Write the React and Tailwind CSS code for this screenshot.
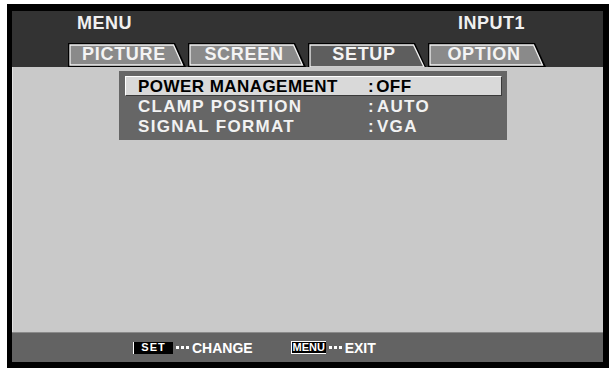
import React from 'react'

const font = { fontFamily: '"Liberation Sans", Arial, sans-serif' }

function Tab({ label, active }) {
  return (
    <div className="relative w-[118px] h-[24px] flex items-center justify-center pr-[6px]">
      <svg className="absolute inset-0" width="118" height="24" viewBox="0 0 118 24">
        <polygon points="0,0 107,0 118,24 0,24" fill="#000" />
        <polygon
          points={active ? '2,2 105.5,2 116,24 2,24' : '2,2 105.5,2 114.5,22 2,22'}
          fill={active ? '#5e5e5e' : '#8a8a8a'}
          stroke="#f2f2f2"
          strokeWidth="1.3"
        />
      </svg>
      <span className="relative -mt-[2px] text-[18px] leading-none font-bold tracking-[0.7px] text-[#f4f4f4]">
        {label}
      </span>
    </div>
  )
}

function Row({ label, value, selected }) {
  return (
    <div
      className={
        selected
          ? 'flex h-[20px] items-center pl-[12px] bg-[#d9d9d9] border-t border-l border-white border-b border-r border-b-[#3a3a3a] border-r-[#3a3a3a] text-black tracking-[0.45px]'
          : 'flex h-[20px] items-center pl-[13px] text-[#f2f2f2] tracking-[1.3px]'
      }
    >
      <span className="w-[230px] text-[17px] leading-none font-bold">{label}</span>
      <span className="text-[17px] leading-none font-bold">
        <span className="mr-[2px]">:</span>
        {value}
      </span>
    </div>
  )
}

function Dots() {
  return (
    <span className="flex gap-[2px] mx-[3px]">
      <span className="w-[3px] h-[3px] bg-white" />
      <span className="w-[3px] h-[3px] bg-white" />
      <span className="w-[3px] h-[3px] bg-white" />
    </span>
  )
}

export default function App() {
  return (
    <div className="w-[609px] h-[368px] bg-white pl-[7px] pt-[4px]" style={font}>
      <div className="w-[602px] h-[364px] bg-black pl-[5px] pt-[7px]">
        <div className="w-[591px] h-[351px] flex flex-col">
          {/* header */}
          <div className="h-[56px] bg-[#333333] flex flex-col">
            <div className="h-[20px] mt-[2px] flex items-center text-[18px] leading-none font-bold text-[#f0f0f0] tracking-[0.5px]">
              <span className="ml-[65px]">MENU</span>
              <span className="ml-auto mr-[78px]">INPUT1</span>
            </div>
            <div className="mt-[10px] h-[24px] ml-[56px] flex gap-[2px]">
              <Tab label="PICTURE" />
              <Tab label="SCREEN" />
              <Tab label="SETUP" active />
              <Tab label="OPTION" />
            </div>
          </div>

          {/* body */}
          <div className="flex-1 bg-[#c9c9c9] border-l border-[#e0e0e0] pt-[4px] pl-[106px]">
            <div className="w-[388px] h-[69px] bg-[#666666] pt-[5px] pl-[6px] pr-[5px]">
              <Row label="POWER MANAGEMENT" value="OFF" selected />
              <Row label="CLAMP POSITION" value="AUTO" />
              <Row label="SIGNAL FORMAT" value="VGA" />
            </div>
          </div>

          {/* footer */}
          <div className="h-[30px] bg-[#636363] border-t border-[#8a8a8a] flex items-center text-white font-bold text-[14px] leading-none">
            <span className="ml-[121px] w-[40px] h-[12px] bg-black border-l border-white flex items-center justify-center text-[11px] tracking-[1px]">
              SET
            </span>
            <Dots />
            <span>CHANGE</span>
            <span className="ml-[38px] w-[35px] h-[13px] bg-black border-l border-t border-b border-white flex items-center justify-center text-[11px]">
              MENU
            </span>
            <Dots />
            <span>EXIT</span>
          </div>
        </div>
      </div>
    </div>
  )
}
